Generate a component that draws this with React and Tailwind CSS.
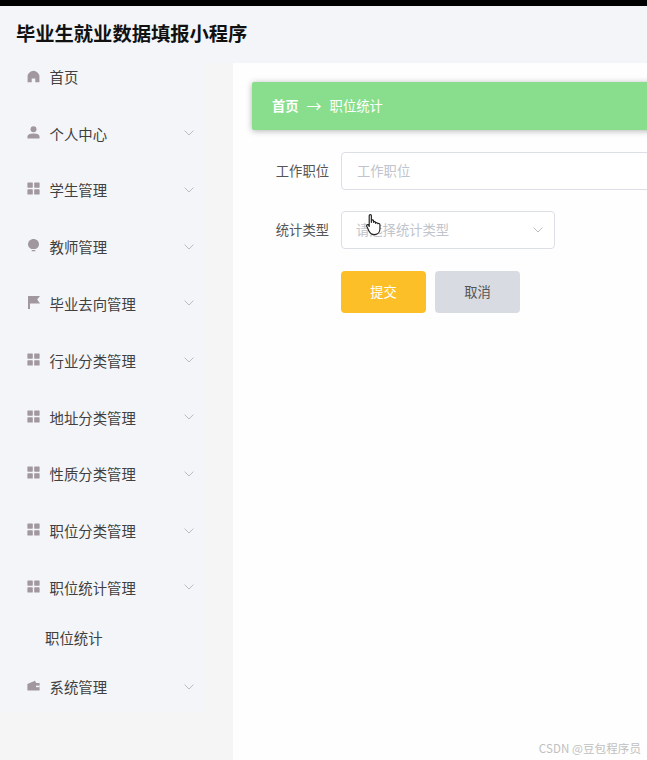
import React from "react";

const font = { fontFamily: '"Noto Sans CJK SC", "Noto Sans", sans-serif' };

const Home = () => (
  <svg viewBox="0 0 13 13" className="w-[13px] h-[13px]" fill="#a1979f">
    <path d="M6.5 0.8 C9 0.8 12.4 4 12.4 5.6 V12.2 H8.3 V8.4 H4.7 V12.2 H0.6 V5.6 C0.6 4 4 0.8 6.5 0.8Z" />
  </svg>
);
const User = () => (
  <svg viewBox="0 0 13 13" className="w-[13px] h-[13px]" fill="#a1979f">
    <circle cx="6.5" cy="3.2" r="3" />
    <path d="M0.5 12.4 V10.4 C0.5 8.4 2.6 7.4 6.5 7.4 C10.4 7.4 12.5 8.4 12.5 10.4 V12.4Z" />
  </svg>
);
const Grid = () => (
  <svg viewBox="0 0 13 13" className="w-[13px] h-[13px]" fill="#a1979f">
    <rect x="0.4" y="0.5" width="5.4" height="5.2" rx="0.6" />
    <rect x="7.2" y="0.5" width="5.4" height="5.2" rx="0.6" />
    <rect x="0.4" y="7.3" width="5.4" height="5.2" rx="0.6" />
    <rect x="7.2" y="7.3" width="5.4" height="5.2" rx="0.6" />
  </svg>
);
const Bulb = () => (
  <svg viewBox="0 0 13 13" className="w-[13px] h-[13px]" fill="#a1979f">
    <path d="M6.5 0 C9.7 0 12 2.3 12 5.2 C12 7.6 10.4 9.3 8.6 10 H4.4 C2.6 9.3 1 7.6 1 5.2 C1 2.3 3.3 0 6.5 0Z" />
    <rect x="4.6" y="11" width="3.8" height="1.2" rx="0.5" />
  </svg>
);
const Flag = () => (
  <svg viewBox="0 0 13 13" className="w-[13px] h-[13px]" fill="#a1979f">
    <path d="M1 0 H13 L10.2 3.4 L13 7.4 H3 V13 H1Z" />
  </svg>
);
const Wallet = () => (
  <svg viewBox="0 0 13 13" className="w-[13px] h-[13px]" fill="#a1979f">
    <path d="M0.4 5 L8 1.8 L9.2 4 H12.6 V11.6 H0.4Z" />
    <rect x="9" y="6.6" width="3.6" height="1.6" fill="#f3f5f9" />
  </svg>
);
const Chevron = () => (
  <svg viewBox="0 0 10 6" className="w-[10px] h-[6px]" fill="none" stroke="#b4b6bb" strokeWidth="0.9">
    <path d="M0.6 0.6 L5 5 L9.4 0.6" />
  </svg>
);

const items = [
  [User, "个人中心"],
  [Grid, "学生管理"],
  [Bulb, "教师管理"],
  [Flag, "毕业去向管理"],
  [Grid, "行业分类管理"],
  [Grid, "地址分类管理"],
  [Grid, "性质分类管理"],
  [Grid, "职位分类管理"],
  [Grid, "职位统计管理"],
];

function Row({ Icon, label }) {
  return (
    <div className="h-[56.8px] flex items-center pl-[27px] pr-[11px]">
      <span className="w-[22.5px] flex items-center -mt-[3px]">
        <Icon />
      </span>
      <span className="text-[14.4px] leading-5 text-[#404040] flex-1 whitespace-nowrap">{label}</span>
      <span className="flex items-center -mt-[1px]">
        <Chevron />
      </span>
    </div>
  );
}

export default function App() {
  return (
    <div style={font} className="relative w-[647px] h-[760px] overflow-hidden flex flex-col bg-[#fefefe]">
      <div className="h-[6px] bg-black shrink-0" />
      <header className="h-[57px] shrink-0 bg-[#f3f5f9] flex items-center pl-[16px]">
        <h1 className="text-[19.3px] font-bold leading-none text-[#111] whitespace-nowrap -mt-[2px]">毕业生就业数据填报小程序</h1>
      </header>
      <div className="flex flex-1 min-h-0">
        <aside className="w-[233px] shrink-0 bg-[#f5f5f5]">
          <div className="w-[205px] h-[649px] bg-[#f3f5f9]">
            <div className="h-[28px] mb-[14.2px] flex items-center pl-[27px]">
              <span className="w-[22.5px] flex items-center -mt-[1px]">
                <Home />
              </span>
              <span className="text-[14.4px] leading-5 text-[#404040]">首页</span>
            </div>
            {items.map(([Icon, label]) => (
              <Row key={label} Icon={Icon} label={label} />
            ))}
            <div className="h-[42.4px] flex items-center pl-[45px] text-[14.4px] text-[#404040]">职位统计</div>
            <Row Icon={Wallet} label="系统管理" />
          </div>
        </aside>
        <main className="flex-1 min-w-0 overflow-hidden pt-[19px] pl-[19px]">
          <div className="w-[500px] h-[48px] bg-[#88de8c] rounded-[2px] shadow-[0_1px_6px_rgba(0,0,0,0.3)] flex items-center pl-[20px] text-[13.3px] text-white whitespace-nowrap">
            <span className="font-bold -mt-[1px]">首页</span>
            <span className="mx-[8px] text-[15px] leading-none -mt-[1px]">→</span>
            <span className="-mt-[1px]">职位统计</span>
          </div>
          <div className="mt-[22px] flex items-center h-[38px]">
            <label className="w-[77px] shrink-0 text-right whitespace-nowrap text-[13.3px] text-[#555]">工作职位</label>
            <div className="ml-[12px] w-[400px] shrink-0 h-[38px] bg-white border border-[#dcdfe6] rounded-[4px] flex items-center pl-[15px] text-[13.3px] text-[#c0c4cc]">
              <span className="-mt-[1px]">工作职位</span>
            </div>
          </div>
          <div className="mt-[21px] flex items-center h-[38px]">
            <label className="w-[77px] shrink-0 text-right whitespace-nowrap text-[13.3px] text-[#555]">统计类型</label>
            <div className="ml-[12px] w-[214px] h-[38px] bg-white border border-[#dcdfe6] rounded-[4px] flex items-center justify-between pl-[14px] pr-[11px] text-[13.3px] text-[#c0c4cc]">
              <span className="-mt-[1px]">请选择统计类型</span>
              <Chevron />
            </div>
          </div>
          <div className="mt-[22px] ml-[89px] flex gap-[9px]">
            <div className="w-[85px] h-[42px] bg-[#fdbf28] rounded-[4px] flex items-center justify-center text-[13.3px] text-white">提交</div>
            <div className="w-[85px] h-[42px] bg-[#d8dbe1] rounded-[4px] flex items-center justify-center text-[13.3px] text-[#555]">取消</div>
          </div>
        </main>
      </div>
      <svg viewBox="0 0 14 20" className="absolute left-[366px] top-[213px] w-[15px] h-[23px]" fill="#ffffff" stroke="#222" strokeWidth="1.1" strokeLinejoin="round">
        <path d="M3 1.6 C3 0.4 5 0.4 5 1.6 V8 L5.2 6.4 C5.4 5.4 7 5.4 7.1 6.6 V8 C7.2 7 8.9 7 9 8.1 V8.9 C9.2 8 11 8.2 11 9.3 C11.2 8.8 13 8.8 13 10.2 V14 C13 17 11 19.4 8 19.4 C5 19.4 3.6 18 2.6 15.8 L0.7 11.6 C0.3 10.4 1.8 9.6 2.6 10.8 L3 11.8Z" />
      </svg>
      <div className="absolute right-[6px] bottom-[4px] text-[11.5px] leading-4 tracking-[0.1px] text-[#c0c0c0] whitespace-nowrap">CSDN @豆包程序员</div>
    </div>
  );
}
